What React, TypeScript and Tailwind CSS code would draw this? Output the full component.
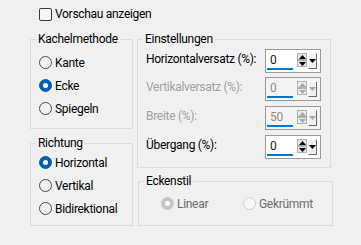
import React from "react";

function Radio({ checked, disabled, label, labelClass }: { checked?: boolean; disabled?: boolean; label: string; labelClass?: string }) {
  let circle = "";
  if (checked && !disabled) circle = "bg-[#005fb8] border-[#005fb8]";
  else if (checked && disabled) circle = "bg-[#c5c5c5] border-[#c5c5c5]";
  else if (disabled) circle = "bg-[#f7f7f7] border-[#cfcfcf]";
  else circle = "bg-[#f3f3f3] border-[#4a4a4a]";
  return (
    <div className="flex items-center h-[23px]">
      <span className={"w-[13px] h-[13px] rounded-full border flex items-center justify-center shrink-0 " + circle}>
        {checked && <span className="w-[5px] h-[5px] rounded-full bg-white" />}
      </span>
      <span className={"ml-[3px] whitespace-nowrap " + (labelClass ?? "text-black")}>{label}</span>
    </div>
  );
}

function Arrow({ up, color }: { up?: boolean; color: string }) {
  return (
    <svg width="7" height="4" viewBox="0 0 7 4" className="block">
      {up ? <polygon points="0,4 7,4 3.5,0" fill={color} /> : <polygon points="0,0 7,0 3.5,4" fill={color} />}
    </svg>
  );
}

function Spin({ value, disabled }: { value: string; disabled?: boolean }) {
  const arrowColor = disabled ? "#a8a8a8" : "#000000";
  return (
    <div className={"w-[56px] h-[24px] border border-[#9a9a9a] flex " + (disabled ? "bg-[#f4f4f4]" : "bg-white")}>
      <div className="w-[31px] flex flex-col">
        <div className={"pl-[4px] pt-[3px] leading-[15px] h-[18px] text-[12px] " + (disabled ? "text-[#9a8a7a]" : "text-[#1a1a1a]")}>{value}</div>
        <div className="ml-[1px] w-[26px] h-[2px] bg-[#0078d7]" />
      </div>
      <div className="pt-[3px] flex flex-col">
        <div className={"w-[10px] h-[7px] border border-[#b0b0b0] flex items-center justify-center " + (disabled ? "bg-[#ececec]" : "bg-[#e5e5e5]")}>
          <Arrow up color={arrowColor} />
        </div>
        <div className={"w-[10px] h-[7px] border border-[#b0b0b0] flex items-center justify-center " + (disabled ? "bg-[#ececec]" : "bg-[#e5e5e5]")}>
          <Arrow color={arrowColor} />
        </div>
      </div>
      <div className="ml-[1px] mt-[3px] w-[9px] h-[16px] bg-[#f0f0f0] border-t border-l border-t-white border-l-white border-r border-b border-r-[#6a6a6a] border-b-[#6a6a6a] flex items-center justify-center">
        <Arrow color={arrowColor} />
      </div>
    </div>
  );
}

function Group({ title, className, bodyClass, children }: { title: string; className: string; bodyClass: string; children: React.ReactNode }) {
  return (
    <fieldset className={"border border-[#dcdcdc] " + className}>
      <legend className="ml-[5px] px-[2px] leading-[16px] text-black">{title}</legend>
      <div className={bodyClass}>{children}</div>
    </fieldset>
  );
}

export default function App() {
  return (
    <div className="w-[361px] h-[245px] bg-[#f0f0f0] text-[12px] tracking-[-0.3px] text-black overflow-hidden" style={{ fontFamily: 'Roboto, "Noto Sans", sans-serif' }}>
      <div className="pt-[7px] pl-[39px] flex items-center h-[21px]">
        <span className="w-[13px] h-[13px] rounded-[2px] border border-[#3a3a3a] bg-[#f6f6f6]" />
        <span className="ml-[3px] leading-[16px]">Vorschau anzeigen</span>
      </div>
      <div className="flex mt-[10px] pl-[30px]">
        <div className="flex flex-col w-[103px]">
          <Group title="Kachelmethode" className="h-[98px]" bodyClass="pl-[8px] pt-[4px]">
            <Radio label="Kante" />
            <Radio label="Ecke" checked />
            <Radio label="Spiegeln" />
          </Group>
          <Group title="Richtung" className="h-[91px] mt-[6px]" bodyClass="pl-[8px]">
            <Radio label="Horizontal" checked />
            <Radio label="Vertikal" />
            <Radio label="Bidirektional" />
          </Group>
        </div>
        <div className="flex flex-col ml-[4px]">
          <Group title="Einstellungen" className="w-[194px] h-[137px]" bodyClass="pl-[8px]">
            <div className="flex items-start mt-[2px]">
              <span className="w-[119px] leading-[16px] pt-[2px] whitespace-nowrap">Horizontalversatz (%):</span>
              <Spin value="0" />
            </div>
            <div className="flex items-start mt-[4px]">
              <span className="w-[119px] leading-[16px] pt-[2px] whitespace-nowrap text-[#a0a0a0]">Vertikalversatz (%):</span>
              <Spin value="0" disabled />
            </div>
            <div className="flex items-start mt-[5px]">
              <span className="w-[119px] leading-[16px] pt-[2px] whitespace-nowrap text-[#a0a0a0]">Breite (%):</span>
              <Spin value="50" disabled />
            </div>
            <div className="flex items-start mt-[5px]">
              <span className="w-[119px] leading-[16px] pt-[2px] whitespace-nowrap">Übergang (%):</span>
              <Spin value="0" />
            </div>
          </Group>
          <Group title="Eckenstil" className="w-[195px] h-[53px] mt-[5px] ml-[1px]" bodyClass="pl-[22px] pt-[3px]">
            <div className="flex">
              <div className="w-[82px]">
                <Radio label="Linear" checked disabled labelClass="text-[#6d6d6d]" />
              </div>
              <Radio label="Gekrümmt" disabled labelClass="text-[#6d6d6d]" />
            </div>
          </Group>
        </div>
      </div>
    </div>
  );
}
